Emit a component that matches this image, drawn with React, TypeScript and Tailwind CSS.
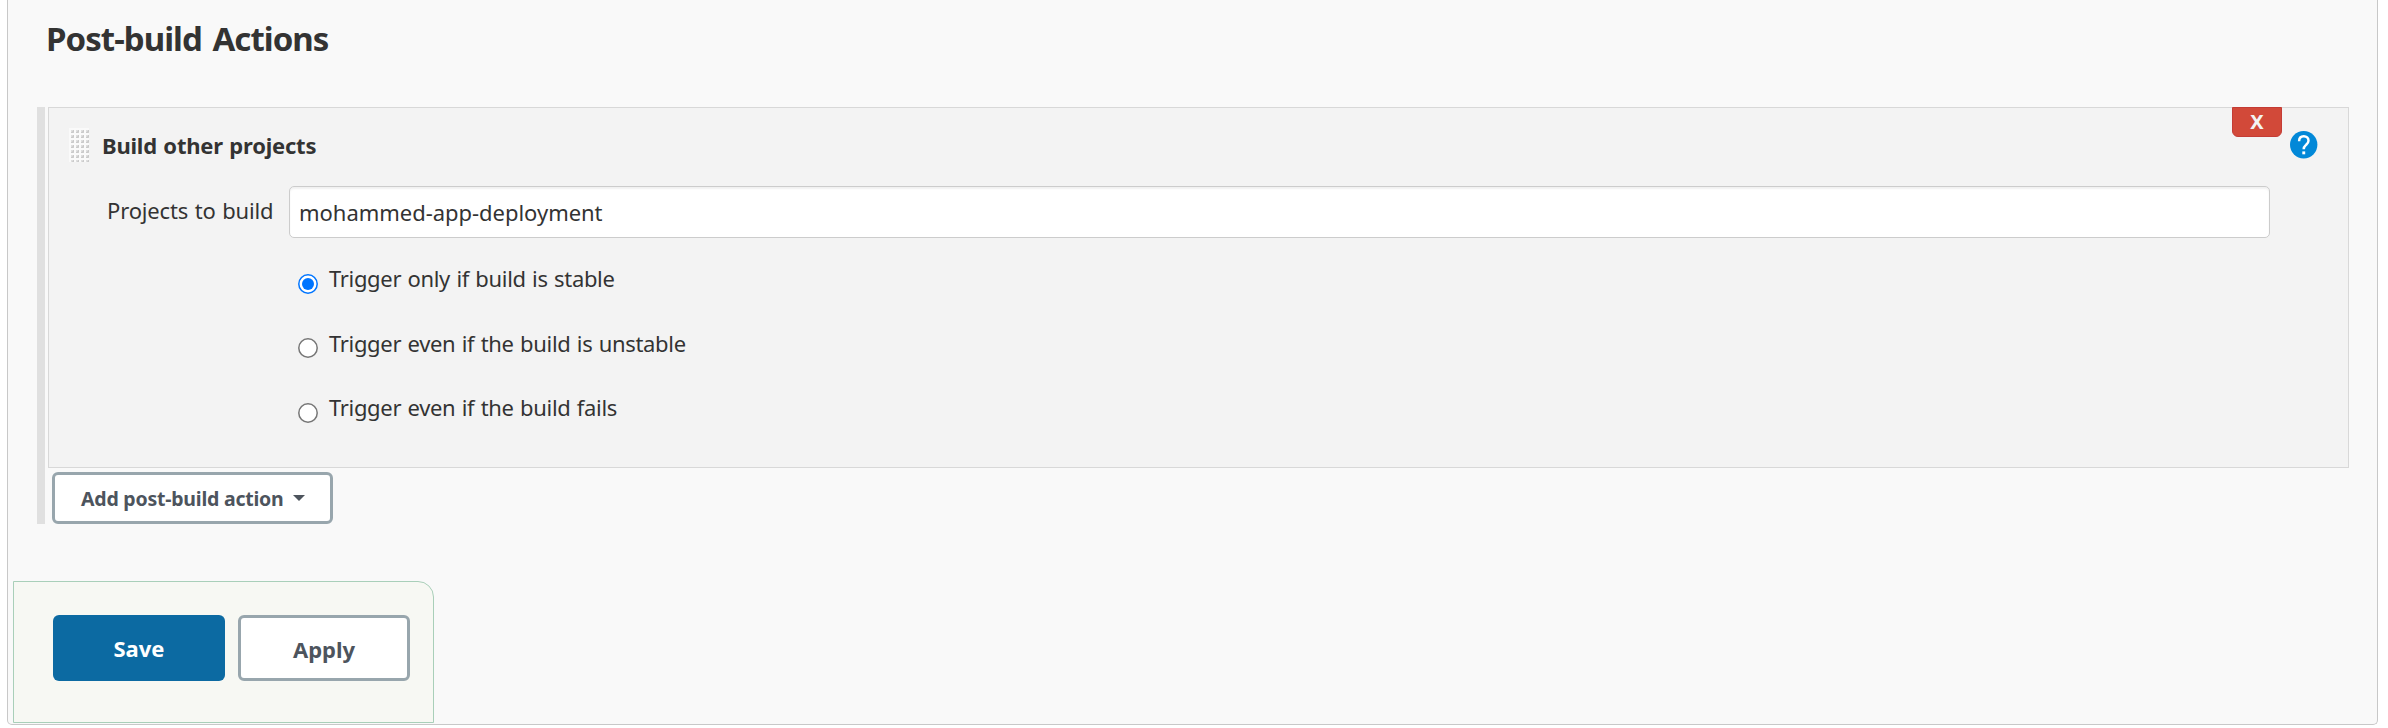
import React, { useState } from "react";

const OPTIONS = [
  { label: "Trigger only if build is stable", row: "", dot: "mt-[11px]" },
  { label: "Trigger even if the build is unstable", row: "mt-[35px]", dot: "mt-[10px]" },
  { label: "Trigger even if the build fails", row: "mt-[34px]", dot: "mt-[11px]" },
];

function DragHandle() {
  return (
    <svg width="20" height="34" viewBox="0 0 20 34" shapeRendering="crispEdges" className="shrink-0 cursor-move">
      <defs>
        <pattern id="grip" width="5" height="5" patternUnits="userSpaceOnUse">
          <rect width="5" height="5" fill="#fafafa" />
          <rect x="2" y="2" width="3" height="3" fill="#dedede" />
          <rect x="3" y="3" width="2" height="2" fill="#d0d0d0" />
          <rect x="2" y="4" width="2" height="1" fill="#cacaca" />
          <rect x="4" y="2" width="1" height="2" fill="#cacaca" />
        </pattern>
      </defs>
      <rect width="20" height="34" fill="url(#grip)" />
    </svg>
  );
}

function HelpIcon() {
  return (
    <svg width="28" height="28" viewBox="0 0 28 28" className="shrink-0">
      <circle cx="13.7" cy="13.7" r="13.7" fill="#0288d8" />
      <path d="M9.1 10.2C9.1 7 11.1 5.3 13.8 5.3s4.7 1.7 4.7 4.4c0 2-1.2 3-2.5 4.2-1.4 1.2-2.3 2.1-2.3 4.4" fill="none" stroke="#fff" strokeWidth="2.5" />
      <rect x="12.3" y="20.4" width="2.9" height="2.9" fill="#fff" />
    </svg>
  );
}

function RadioDot({ checked }: { checked: boolean }) {
  return (
    <svg width="20" height="20" viewBox="0 0 20 20">
      <circle cx="10" cy="10" r="9.2" fill="#fff" stroke={checked ? "#0075ff" : "#767676"} strokeWidth="1.5" />
      {checked && <circle cx="10" cy="10" r="6" fill="#0075ff" />}
    </svg>
  );
}

export default function App() {
  const [selected, setSelected] = useState(0);
  return (
    <div className="h-[728px] w-[2388px] overflow-hidden bg-white pl-[7px] font-['Noto_Sans','Open_Sans',sans-serif] text-[22px] leading-[30px] text-[#333] [word-spacing:1px]">
      <main className="flex h-[725px] w-[2371px] flex-col rounded-b-[5px] border border-t-0 border-[#c8c8c8] bg-[#f9f9f9]">
        <h2 className="pt-4 pl-[38px] text-[33px] leading-[46px] font-bold tracking-[-0.96px] [word-spacing:3px]">Post-build Actions</h2>

        <div className="mt-[45px] ml-[29px] flex h-[417px] gap-[3px]">
          <div className="w-2 shrink-0 bg-[#e0e0e0]" />
          <div className="flex flex-col items-start">
            <section className="relative h-[361px] w-[2301px] border border-[#d8d8d8] bg-[#f3f3f3] pt-5 pl-5">
              <button className="absolute -top-px right-[66px] flex h-[30px] w-[50px] items-center justify-center rounded-b-[6px] border border-[#c43c35] bg-[#d24939] pb-px text-[20px] font-bold text-[#f3f3f3]">
                <span className="leading-none">X</span>
              </button>
              <header className="flex h-[34px] items-start">
                <DragHandle />
                <h3 className="ml-[13px] pt-[2px] font-bold tracking-[-0.22px]">Build other projects</h3>
                <div className="mt-[3px] mr-[30px] ml-auto">
                  <HelpIcon />
                </div>
              </header>

              <div className="mt-6 ml-[38px] flex items-start">
                <label htmlFor="projects" className="w-[182px] shrink-0 pt-[9px] tracking-[-0.16px]">Projects to build</label>
                <input
                  id="projects"
                  defaultValue="mohammed-app-deployment"
                  className="h-[52px] w-[1981px] rounded-[5px] border border-[#ccc] bg-white pl-[9px] tracking-[-0.03px] shadow-[inset_0_2px_2px_rgba(0,0,0,0.06)] outline-none"
                />
              </div>

              <div className="mt-[25px] ml-[229px] flex flex-col items-start">
                {OPTIONS.map((o, i) => (
                  <label key={o.label} className={`flex h-[30px] items-start gap-[11px] tracking-[-0.33px] ${o.row}`}>
                    <input type="radio" name="threshold" className="sr-only" checked={selected === i} onChange={() => setSelected(i)} />
                    <span className={o.dot}>
                      <RadioDot checked={selected === i} />
                    </span>
                    {o.label}
                  </label>
                ))}
              </div>
            </section>

            <button className="mt-1 ml-1 flex h-[52px] w-[281px] items-center gap-[9px] rounded-[6px] border-3 border-[#98a6ad] bg-white pt-[2px] pl-[26px] text-[19.5px] font-bold tracking-[-0.22px] text-[#4d545d]">
              Add post-build action
              <svg width="12" height="6" viewBox="0 0 12 6" className="-mt-[3px]">
                <path d="M0 0h12L6 6z" fill="#4d545d" />
              </svg>
            </button>
          </div>
        </div>

        <footer className="mt-[57px] ml-[5px] flex h-[142px] w-[421px] items-start gap-[13px] rounded-tr-[16px] border border-[#a9cfb9] bg-[#f7f8f3] pt-[33px] pl-[39px] font-bold">
          <button className="h-[66px] w-[172px] rounded-[6px] bg-[#0c6aa2] pb-px text-white">Save</button>
          <button className="h-[66px] w-[172px] rounded-[6px] border-3 border-[#98a6ad] bg-white pt-px text-[#4d545d]">Apply</button>
        </footer>
      </main>
    </div>
  );
}
